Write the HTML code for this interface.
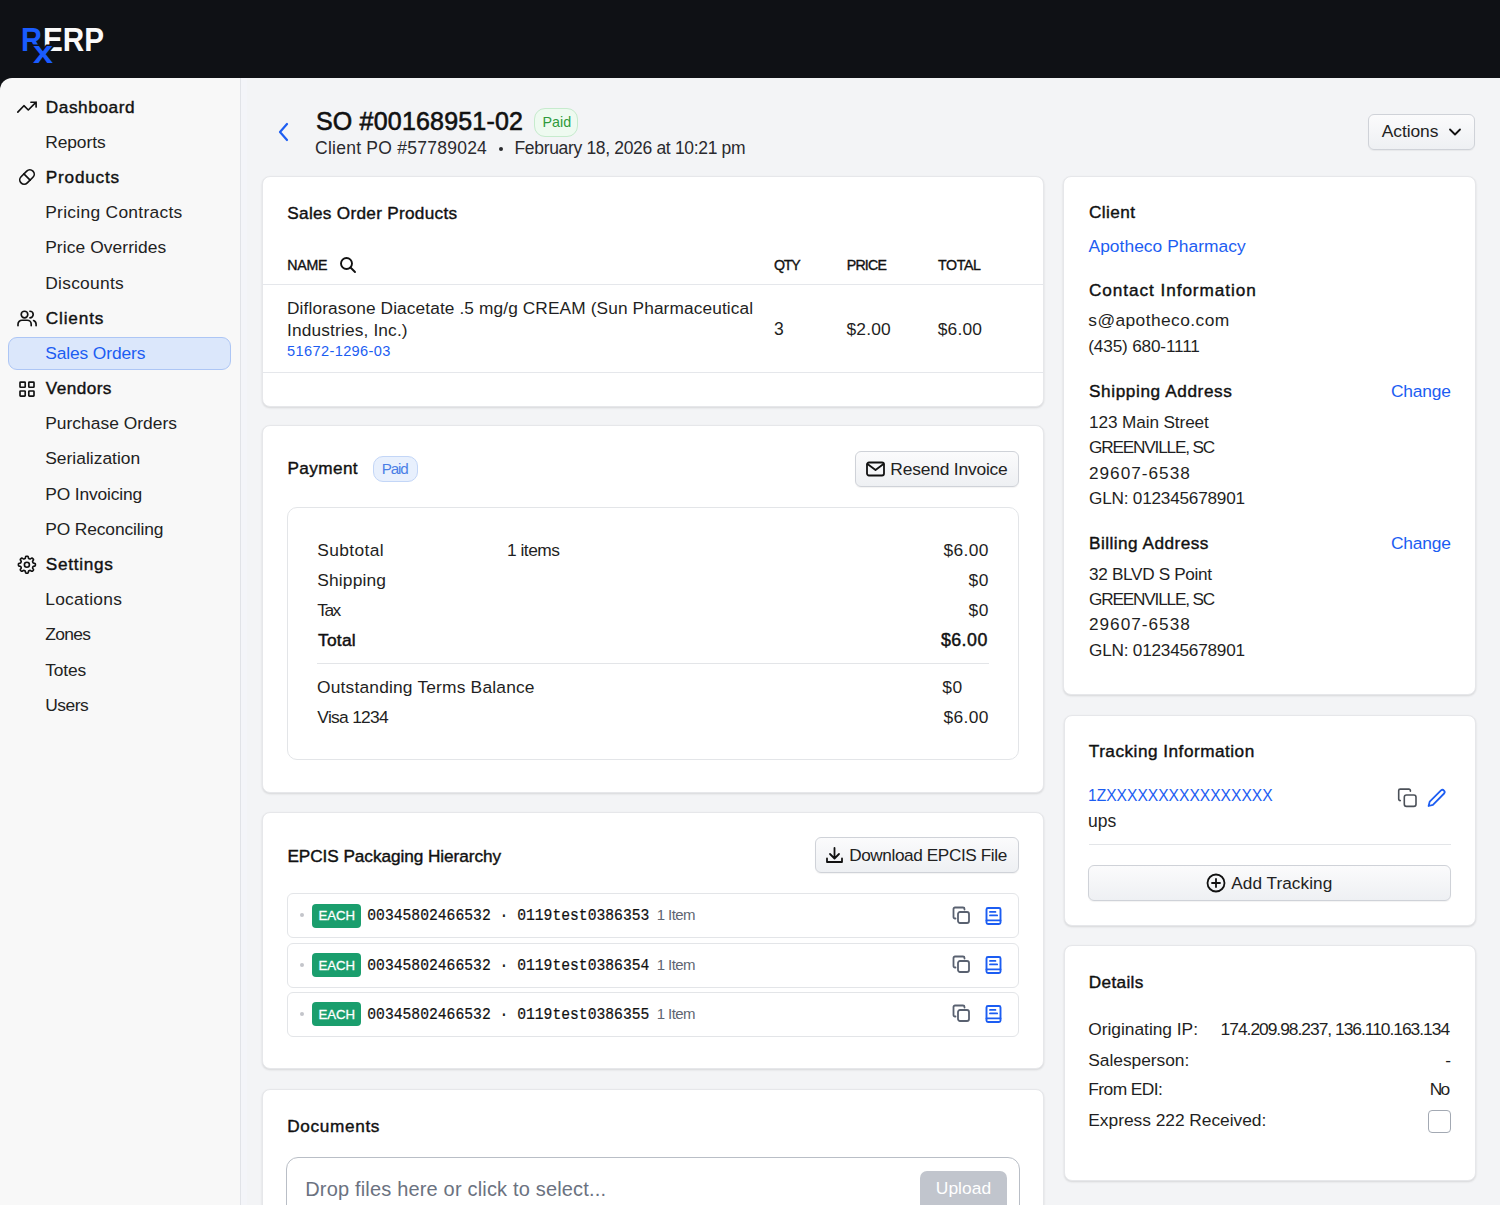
<!DOCTYPE html>
<html><head><meta charset="utf-8">
<style>
*{box-sizing:border-box;margin:0;padding:0}
html,body{width:1500px;height:1205px;overflow:hidden}
body{font-family:"Liberation Sans",sans-serif;background:#0f1115;position:relative;color:#1f1f23}
.a{position:absolute;white-space:nowrap;line-height:0}
#hdr{position:absolute;left:0;top:0;width:1500px;height:78px;background:#0f1115}
#side{position:absolute;left:0;top:78px;width:241px;height:1127px;background:#f8f8f8;border-top-left-radius:12px;border-right:1px solid #e1e3e8}
#main{position:absolute;left:241px;top:78px;width:1259px;height:1127px;background:#f3f4f6}
.card{position:absolute;background:#fff;border:1px solid #e6e7ea;border-radius:8px;box-shadow:0 1px 2px rgba(0,0,0,.09),0 1px 3px rgba(0,0,0,.04)}
.btn{position:absolute;border:1px solid #cfd2d8;border-radius:6px;background:linear-gradient(#fbfbfc,#eef0f3);box-shadow:0 1px 1px rgba(0,0,0,.05)}
svg.s{position:absolute}
</style></head><body>
<div id="hdr"></div>
<div id="side"></div>
<div id="main"></div>

<svg class="s" style="left:0;top:0" width="130" height="78" viewBox="0 0 130 78">
 <text x="21" y="50.7" font-family="Liberation Sans" font-weight="bold" font-size="33" fill="#1a5cff" textLength="21" lengthAdjust="spacingAndGlyphs">R</text>
 <text x="43" y="50.7" font-family="Liberation Sans" font-weight="bold" font-size="33" fill="#fafafa" textLength="61" lengthAdjust="spacingAndGlyphs">ERP</text>
 <text x="33" y="62.7" font-family="Liberation Sans" font-weight="bold" font-size="32" fill="#1a5cff" stroke="#0f1115" stroke-width="3" paint-order="stroke" textLength="20" lengthAdjust="spacingAndGlyphs">x</text>
</svg>
<svg class="s" style="left:16px;top:97px" width="22" height="20" viewBox="0 0 22 20" fill="none" stroke="#111" stroke-width="1.65" stroke-linecap="round" stroke-linejoin="round"><path d="M1.8 15.1l6.1-6.4 4.4 4.3 7.8-7.8M14.9 5.2h5.2v4.9"/></svg>
<svg class="s" style="left:16px;top:166.4px" width="22" height="22" viewBox="0 0 22 22" fill="none" stroke="#111" stroke-width="1.65" stroke-linecap="round" stroke-linejoin="round"><g transform="rotate(-45 11 11)"><rect x="2.6" y="6.6" width="16.8" height="8.8" rx="4.4"/><path d="M11 6.6v8.8"/></g></svg>
<svg class="s" style="left:16px;top:308px" width="22" height="20" viewBox="0 0 22 20" fill="none" stroke="#111" stroke-width="1.65" stroke-linecap="round" stroke-linejoin="round"><circle cx="8.5" cy="6.5" r="3.3"/><path d="M2 17.7v-1.5a4 4 0 014-4h5.2a4 4 0 014 4v1.5M13.9 3.2a3.3 3.3 0 010 6.6M17.6 12.6a4 4 0 012.5 3.7v1.4"/></svg>
<svg class="s" style="left:16px;top:379px" width="22" height="20" viewBox="0 0 22 20" fill="none" stroke="#111" stroke-width="1.65" stroke-linecap="round" stroke-linejoin="round"><rect x="4" y="3.15" width="5.2" height="5.1" rx=".6"/><rect x="12.8" y="3.15" width="5.2" height="5.1" rx=".6"/><rect x="4" y="12" width="5.2" height="5.1" rx=".6"/><rect x="12.8" y="12" width="5.2" height="5.1" rx=".6"/></svg>
<svg class="s" style="left:16px;top:554px" width="22" height="22" viewBox="0 0 22 22" fill="none" stroke="#111" stroke-width="1.65" stroke-linecap="round" stroke-linejoin="round"><path d="M19.40 10.70L19.39 10.92L19.38 11.14L19.34 11.36L19.27 11.58L19.14 11.78L18.89 11.96L18.46 12.10L17.95 12.20L17.53 12.29L17.26 12.41L17.11 12.54L17.02 12.69L16.94 12.84L16.88 12.99L16.81 13.15L16.75 13.30L16.69 13.46L16.63 13.62L16.60 13.79L16.61 13.99L16.71 14.26L16.94 14.63L17.24 15.06L17.44 15.45L17.49 15.76L17.44 16.00L17.34 16.20L17.21 16.38L17.06 16.55L16.91 16.71L16.75 16.86L16.58 17.01L16.40 17.14L16.20 17.24L15.96 17.29L15.65 17.24L15.26 17.04L14.83 16.74L14.46 16.51L14.19 16.41L13.99 16.40L13.82 16.43L13.66 16.49L13.50 16.55L13.35 16.61L13.19 16.68L13.04 16.74L12.89 16.82L12.74 16.91L12.61 17.06L12.49 17.33L12.40 17.75L12.30 18.26L12.16 18.69L11.98 18.94L11.78 19.07L11.56 19.14L11.34 19.18L11.12 19.19L10.90 19.20L10.68 19.19L10.46 19.18L10.24 19.14L10.02 19.07L9.82 18.94L9.64 18.69L9.50 18.26L9.40 17.75L9.31 17.33L9.19 17.06L9.06 16.91L8.91 16.82L8.76 16.74L8.61 16.68L8.45 16.61L8.30 16.55L8.14 16.49L7.98 16.43L7.81 16.40L7.61 16.41L7.34 16.51L6.97 16.74L6.54 17.04L6.15 17.24L5.84 17.29L5.60 17.24L5.40 17.14L5.22 17.01L5.05 16.86L4.89 16.71L4.74 16.55L4.59 16.38L4.46 16.20L4.36 16.00L4.31 15.76L4.36 15.45L4.56 15.06L4.86 14.63L5.09 14.26L5.19 13.99L5.20 13.79L5.17 13.62L5.11 13.46L5.05 13.30L4.99 13.15L4.92 12.99L4.86 12.84L4.78 12.69L4.69 12.54L4.54 12.41L4.27 12.29L3.85 12.20L3.34 12.10L2.91 11.96L2.66 11.78L2.53 11.58L2.46 11.36L2.42 11.14L2.41 10.92L2.40 10.70L2.41 10.48L2.42 10.26L2.46 10.04L2.53 9.82L2.66 9.62L2.91 9.44L3.34 9.30L3.85 9.20L4.27 9.11L4.54 8.99L4.69 8.86L4.78 8.71L4.86 8.56L4.92 8.41L4.99 8.25L5.05 8.10L5.11 7.94L5.17 7.78L5.20 7.61L5.19 7.41L5.09 7.14L4.86 6.77L4.56 6.34L4.36 5.95L4.31 5.64L4.36 5.40L4.46 5.20L4.59 5.02L4.74 4.85L4.89 4.69L5.05 4.54L5.22 4.39L5.40 4.26L5.60 4.16L5.84 4.11L6.15 4.16L6.54 4.36L6.97 4.66L7.34 4.89L7.61 4.99L7.81 5.00L7.98 4.97L8.14 4.91L8.30 4.85L8.45 4.79L8.61 4.72L8.76 4.66L8.91 4.58L9.06 4.49L9.19 4.34L9.31 4.07L9.40 3.65L9.50 3.14L9.64 2.71L9.82 2.46L10.02 2.33L10.24 2.26L10.46 2.22L10.68 2.21L10.90 2.20L11.12 2.21L11.34 2.22L11.56 2.26L11.78 2.33L11.98 2.46L12.16 2.71L12.30 3.14L12.40 3.65L12.49 4.07L12.61 4.34L12.74 4.49L12.89 4.58L13.04 4.66L13.19 4.72L13.35 4.79L13.50 4.85L13.66 4.91L13.82 4.97L13.99 5.00L14.19 4.99L14.46 4.89L14.83 4.66L15.26 4.36L15.65 4.16L15.96 4.11L16.20 4.16L16.40 4.26L16.58 4.39L16.75 4.54L16.91 4.69L17.06 4.85L17.21 5.02L17.34 5.20L17.44 5.40L17.49 5.64L17.44 5.95L17.24 6.34L16.94 6.77L16.71 7.14L16.61 7.41L16.60 7.61L16.63 7.78L16.69 7.94L16.75 8.10L16.81 8.25L16.88 8.41L16.94 8.56L17.02 8.71L17.11 8.86L17.26 8.99L17.53 9.11L17.95 9.20L18.46 9.30L18.89 9.44L19.14 9.62L19.27 9.82L19.34 10.04L19.38 10.26L19.39 10.48Z"/><circle cx="10.9" cy="10.7" r="2.5"/></svg>
<div style="position:absolute;left:241px;top:78px;width:6px;height:1127px;background:#f4f5f9"></div>
<div style="position:absolute;left:8px;top:337px;width:222.5px;height:32.5px;background:#dbe7fb;border:1px solid #adc6f5;border-radius:9px"></div>
<div class="a" style="left:45.7px;top:107px;font-size:17.2px;color:#111;-webkit-text-stroke:0.4px #111;letter-spacing:0.612px">Dashboard</div>
<div class="a" style="left:45.2px;top:142px;font-size:17.4px;color:#222;letter-spacing:-0.083px">Reports</div>
<div class="a" style="left:45.7px;top:177px;font-size:17.2px;color:#111;-webkit-text-stroke:0.4px #111;letter-spacing:0.814px">Products</div>
<div class="a" style="left:45.2px;top:212px;font-size:17.4px;color:#222;letter-spacing:0.294px">Pricing Contracts</div>
<div class="a" style="left:45.2px;top:247px;font-size:17.4px;color:#222;letter-spacing:0.086px">Price Overrides</div>
<div class="a" style="left:45.2px;top:283px;font-size:17.4px;color:#222;letter-spacing:0.275px">Discounts</div>
<div class="a" style="left:45.7px;top:318px;font-size:17.2px;color:#111;-webkit-text-stroke:0.4px #111;letter-spacing:0.867px">Clients</div>
<div class="a" style="left:45.2px;top:353px;font-size:17.4px;color:#1c5df2;letter-spacing:-0.118px">Sales Orders</div>
<div class="a" style="left:45.7px;top:388px;font-size:17.2px;color:#111;-webkit-text-stroke:0.4px #111;letter-spacing:0.450px">Vendors</div>
<div class="a" style="left:45.2px;top:423px;font-size:17.4px;color:#222;letter-spacing:0.029px">Purchase Orders</div>
<div class="a" style="left:45.2px;top:458px;font-size:17.4px;color:#222;letter-spacing:0.025px">Serialization</div>
<div class="a" style="left:45.2px;top:494px;font-size:17.4px;color:#222;letter-spacing:-0.136px">PO Invoicing</div>
<div class="a" style="left:45.2px;top:529px;font-size:17.4px;color:#222;letter-spacing:-0.123px">PO Reconciling</div>
<div class="a" style="left:45.7px;top:564px;font-size:17.2px;color:#111;-webkit-text-stroke:0.4px #111;letter-spacing:0.729px">Settings</div>
<div class="a" style="left:45.2px;top:599px;font-size:17.4px;color:#222;letter-spacing:0.287px">Locations</div>
<div class="a" style="left:45.2px;top:634px;font-size:17.4px;color:#222;letter-spacing:-0.650px">Zones</div>
<div class="a" style="left:45.2px;top:670px;font-size:17.4px;color:#222;letter-spacing:-0.125px">Totes</div>
<div class="a" style="left:45.2px;top:705px;font-size:17.4px;color:#222;letter-spacing:-0.450px">Users</div>
<svg class="s" style="left:277px;top:121px" width="14" height="22" viewBox="0 0 14 22" fill="none" stroke="#1c5df2" stroke-width="2.2" stroke-linecap="round" stroke-linejoin="round"><path d="M10 3l-7 8 7 8"/></svg>
<div class="a" style="left:316px;top:121px;font-size:25px;color:#111;-webkit-text-stroke:0.6px #111;letter-spacing:0.186px">SO #00168951-02</div>
<div style="position:absolute;left:533.5px;top:107.5px;width:44px;height:29px;border:1px solid #c6ebcd;background:#eefaf0;border-radius:11px"></div>
<div class="a" style="left:542.5px;top:122px;font-size:14.3px;color:#2f9a3c;">Paid</div>
<div class="a" style="left:315px;top:148px;font-size:17.5px;color:#2a2a2e;letter-spacing:.25px">Client PO #57789024</div>
<div style="position:absolute;left:498.6px;top:146.9px;width:4.4px;height:4.4px;background:#2a2a2e;border-radius:50%"></div>
<div class="a" style="left:514.5px;top:148px;font-size:17.5px;color:#2a2a2e;letter-spacing:-.33px">February 18, 2026 at 10:21 pm</div>
<div class="btn" style="left:1368px;top:114px;width:107px;height:36px"></div>
<div class="a" style="left:1381.8px;top:131px;font-size:17.4px;color:#222;letter-spacing:-0.083px">Actions</div>
<svg class="s" style="left:1448px;top:127px" width="14" height="10" viewBox="0 0 14 10" fill="none" stroke="#111" stroke-width="1.8" stroke-linecap="round" stroke-linejoin="round"><path d="M2 2.5l5 5 5-5"/></svg>
<div class="card" style="left:262px;top:176px;width:782px;height:231px"></div>
<div class="a" style="left:287.3px;top:213px;font-size:17.2px;color:#111;-webkit-text-stroke:0.4px #111;letter-spacing:0.289px">Sales Order Products</div>
<div class="a" style="left:287.3px;top:265px;font-size:14.2px;color:#111;-webkit-text-stroke:0.35px #111;letter-spacing:-0.233px">NAME</div>
<svg class="s" style="left:339px;top:256px" width="18" height="18" viewBox="0 0 18 18" fill="none" stroke="#111" stroke-width="1.9" stroke-linecap="round"><circle cx="7.5" cy="7.5" r="5.5"/><path d="M11.5 11.5l4.5 4.5"/></svg>
<div class="a" style="left:773.9px;top:265px;font-size:14.2px;color:#111;-webkit-text-stroke:0.35px #111;letter-spacing:-1.200px">QTY</div>
<div class="a" style="left:846.7px;top:265px;font-size:14.2px;color:#111;-webkit-text-stroke:0.35px #111;letter-spacing:-0.775px">PRICE</div>
<div class="a" style="left:938px;top:265px;font-size:14.2px;color:#111;-webkit-text-stroke:0.35px #111;letter-spacing:-0.375px">TOTAL</div>
<div style="position:absolute;left:263px;top:283.5px;width:780px;height:1px;background:#e5e7eb"></div>
<div class="a" style="left:287px;top:308px;font-size:17.3px;color:#1f1f23;letter-spacing:0.111px">Diflorasone Diacetate .5 mg/g CREAM (Sun Pharmaceutical</div>
<div class="a" style="left:287px;top:330px;font-size:17.3px;color:#1f1f23;letter-spacing:0.156px">Industries, Inc.)</div>
<div class="a" style="left:287px;top:351px;font-size:14.6px;color:#1c5df2;letter-spacing:0.367px">51672-1296-03</div>
<div class="a" style="left:774px;top:329px;font-size:17.5px;">3</div>
<div class="a" style="left:846.5px;top:329px;font-size:17.4px;color:#1f1f23;letter-spacing:0.150px">$2.00</div>
<div class="a" style="left:937.7px;top:329px;font-size:17.4px;color:#1f1f23;letter-spacing:0.200px">$6.00</div>
<div style="position:absolute;left:263px;top:372px;width:780px;height:1px;background:#e5e7eb"></div>
<div class="card" style="left:1063px;top:176px;width:413px;height:519px"></div>
<div class="a" style="left:1088.9px;top:212px;font-size:17.2px;color:#111;-webkit-text-stroke:0.4px #111;letter-spacing:0.420px">Client</div>
<div class="a" style="left:1088.5px;top:246px;font-size:17.4px;color:#1c5df2;letter-spacing:0.038px">Apotheco Pharmacy</div>
<div class="a" style="left:1089px;top:290px;font-size:17.2px;color:#111;-webkit-text-stroke:0.4px #111;letter-spacing:0.933px">Contact Information</div>
<div class="a" style="left:1088.3px;top:320px;font-size:17.4px;color:#1f1f23;letter-spacing:0.408px">s@apotheco.com</div>
<div class="a" style="left:1088.3px;top:346px;font-size:17.2px;color:#1f1f23;letter-spacing:-0.169px">(435) 680-1111</div>
<div class="a" style="left:1089px;top:391px;font-size:17.2px;color:#111;-webkit-text-stroke:0.4px #111;letter-spacing:0.607px">Shipping Address</div>
<div class="a" style="right:49.42px;top:391px;font-size:17.4px;color:#1c5df2;letter-spacing:-0.220px">Change</div>
<div class="a" style="left:1089px;top:422px;font-size:17.2px;color:#1f1f23;letter-spacing:-0.107px">123 Main Street</div>
<div class="a" style="left:1089px;top:447px;font-size:17.2px;color:#1f1f23;letter-spacing:-1.169px">GREENVILLE, SC</div>
<div class="a" style="left:1089px;top:473px;font-size:17.2px;color:#1f1f23;letter-spacing:1.000px">29607-6538</div>
<div class="a" style="left:1089px;top:498px;font-size:17.2px;color:#1f1f23;letter-spacing:-0.219px">GLN: 012345678901</div>
<div class="a" style="left:1089px;top:543px;font-size:17.2px;color:#111;-webkit-text-stroke:0.4px #111;letter-spacing:0.471px">Billing Address</div>
<div class="a" style="right:49.42px;top:543px;font-size:17.4px;color:#1c5df2;letter-spacing:-0.220px">Change</div>
<div class="a" style="left:1089px;top:574px;font-size:17.2px;color:#1f1f23;letter-spacing:-0.329px">32 BLVD S Point</div>
<div class="a" style="left:1089px;top:599px;font-size:17.2px;color:#1f1f23;letter-spacing:-1.169px">GREENVILLE, SC</div>
<div class="a" style="left:1089px;top:624px;font-size:17.2px;color:#1f1f23;letter-spacing:1.000px">29607-6538</div>
<div class="a" style="left:1089px;top:650px;font-size:17.2px;color:#1f1f23;letter-spacing:-0.219px">GLN: 012345678901</div>
<div class="card" style="left:262px;top:425.2px;width:782px;height:367.4px"></div>
<div class="a" style="left:287.5px;top:468px;font-size:17.2px;color:#111;-webkit-text-stroke:0.4px #111;letter-spacing:0.383px">Payment</div>
<div style="position:absolute;left:372.5px;top:455.5px;width:45px;height:26.5px;background:#e8f0fd;border:1px solid #c3d6f7;border-radius:10px"></div>
<div class="a" style="left:381.7px;top:469px;font-size:15.2px;color:#4a7fe6;letter-spacing:-1.133px">Paid</div>
<div class="btn" style="left:855px;top:451px;width:164px;height:36px"></div>
<svg class="s" style="left:865px;top:460px" width="21" height="18" viewBox="0 0 21 18" fill="none" stroke="#111" stroke-width="1.8" stroke-linejoin="round" stroke-linecap="round"><rect x="2" y="2.5" width="17" height="13" rx="2"/><path d="M2.5 4l8 6 8-6"/></svg>
<div class="a" style="left:890.3px;top:469px;font-size:17.4px;color:#222;letter-spacing:-0.185px">Resend Invoice</div>
<div style="position:absolute;left:287px;top:507px;width:732px;height:253px;border:1px solid #e3e5e8;border-radius:10px"></div>
<div class="a" style="left:317.3px;top:550px;font-size:17.4px;color:#1f1f23;letter-spacing:0.371px">Subtotal</div>
<div class="a" style="left:507px;top:550px;font-size:17.4px;color:#1f1f23;letter-spacing:-0.500px">1 items</div>
<div class="a" style="right:511.25px;top:550px;font-size:17.4px;color:#1f1f23;letter-spacing:0.350px">$6.00</div>
<div class="a" style="left:317.3px;top:580px;font-size:17.4px;color:#1f1f23;letter-spacing:0.143px">Shipping</div>
<div class="a" style="right:511.10px;top:580px;font-size:17.4px;color:#1f1f23;letter-spacing:0.500px">$0</div>
<div class="a" style="left:317.3px;top:610px;font-size:17.4px;color:#1f1f23;letter-spacing:-1.600px">Tax</div>
<div class="a" style="right:511.10px;top:610px;font-size:17.4px;color:#1f1f23;letter-spacing:0.500px">$0</div>
<div class="a" style="left:318px;top:640px;font-size:17.4px;color:#111;-webkit-text-stroke:0.45px #111;letter-spacing:0.250px">Total</div>
<div class="a" style="left:940.9px;top:640px;font-size:17.8px;color:#111;-webkit-text-stroke:0.45px #111;letter-spacing:0.475px">$6.00</div>
<div style="position:absolute;left:317px;top:663px;width:672px;height:1px;background:#e3e5e8"></div>
<div class="a" style="left:317px;top:687px;font-size:17.4px;color:#1f1f23;letter-spacing:0.175px">Outstanding Terms Balance</div>
<div class="a" style="left:942.3px;top:687px;font-size:17.4px;color:#1f1f23;letter-spacing:0.500px">$0</div>
<div class="a" style="left:317.3px;top:717px;font-size:17.4px;color:#1f1f23;letter-spacing:-0.700px">Visa 1234</div>
<div class="a" style="right:511.25px;top:717px;font-size:17.4px;color:#1f1f23;letter-spacing:0.350px">$6.00</div>
<div class="card" style="left:262px;top:811.8px;width:782px;height:257.2px"></div>
<div class="a" style="left:287.4px;top:856px;font-size:17.2px;color:#111;-webkit-text-stroke:0.4px #111;letter-spacing:-0.050px">EPCIS Packaging Hierarchy</div>
<div class="btn" style="left:814.5px;top:837px;width:204px;height:36px"></div>
<svg class="s" style="left:824px;top:845px" width="21" height="20" viewBox="0 0 21 20" fill="none" stroke="#111" stroke-width="1.8" stroke-linecap="round" stroke-linejoin="round"><path d="M10.5 3v10M6 9l4.5 4.5L15 9M3 13.5V17h15v-3.5"/></svg>
<div class="a" style="left:849.2px;top:855px;font-size:17.2px;color:#222;letter-spacing:-0.400px">Download EPCIS File</div>
<div style="position:absolute;left:287px;top:893.3px;width:732px;height:45px;border:1px solid #e3e5e8;border-radius:6px"></div>
<div style="position:absolute;left:300.1px;top:913.4px;width:4px;height:4px;background:#c3c5ca;border-radius:50%"></div>
<div style="position:absolute;left:312px;top:904.0px;width:49px;height:23.7px;background:#1a9e6d;border-radius:4px"></div>
<div class="a" style="left:318.5px;top:916px;font-size:13.2px;color:#fff;-webkit-text-stroke:.3px #fff">EACH</div>
<div class="a" style="left:367.3px;top:916px;font-size:14.7px;color:#111;font-family:'Liberation Mono',monospace;transform:scaleY(1.07);transform-origin:0 4px;-webkit-text-stroke:.2px #111">00345802466532 &middot; 0119test0386353</div>
<div class="a" style="left:656.7px;top:915px;font-size:15px;color:#5f6672;letter-spacing:-0.560px">1 Item</div>
<svg class="s" style="left:951px;top:904.6px" width="21" height="21" viewBox="0 0 21 21" fill="none" stroke="#596170" stroke-width="1.8" stroke-linejoin="round" stroke-linecap="round"><rect x="7" y="7" width="11" height="11" rx="2"/><path d="M4.5 13.5h-.5a1.5 1.5 0 01-1.5-1.5V4a1.5 1.5 0 011.5-1.5h8A1.5 1.5 0 0113.5 4v.5"/></svg>
<svg class="s" style="left:984px;top:905.6px" width="19" height="20" viewBox="0 0 19 20" fill="none" stroke="#1c5df2" stroke-width="1.9" stroke-linejoin="round" stroke-linecap="round"><rect x="2.5" y="2" width="14" height="16" rx="1.5"/><path d="M6 5.9h5.4M6 9.4h7.1M2.5 14.4h14"/></svg>
<div style="position:absolute;left:287px;top:942.5px;width:732px;height:45px;border:1px solid #e3e5e8;border-radius:6px"></div>
<div style="position:absolute;left:300.1px;top:962.6px;width:4px;height:4px;background:#c3c5ca;border-radius:50%"></div>
<div style="position:absolute;left:312px;top:953.2px;width:49px;height:23.7px;background:#1a9e6d;border-radius:4px"></div>
<div class="a" style="left:318.5px;top:966px;font-size:13.2px;color:#fff;-webkit-text-stroke:.3px #fff">EACH</div>
<div class="a" style="left:367.3px;top:966px;font-size:14.7px;color:#111;font-family:'Liberation Mono',monospace;transform:scaleY(1.07);transform-origin:0 4px;-webkit-text-stroke:.2px #111">00345802466532 &middot; 0119test0386354</div>
<div class="a" style="left:656.7px;top:965px;font-size:15px;color:#5f6672;letter-spacing:-0.560px">1 Item</div>
<svg class="s" style="left:951px;top:953.8px" width="21" height="21" viewBox="0 0 21 21" fill="none" stroke="#596170" stroke-width="1.8" stroke-linejoin="round" stroke-linecap="round"><rect x="7" y="7" width="11" height="11" rx="2"/><path d="M4.5 13.5h-.5a1.5 1.5 0 01-1.5-1.5V4a1.5 1.5 0 011.5-1.5h8A1.5 1.5 0 0113.5 4v.5"/></svg>
<svg class="s" style="left:984px;top:954.8px" width="19" height="20" viewBox="0 0 19 20" fill="none" stroke="#1c5df2" stroke-width="1.9" stroke-linejoin="round" stroke-linecap="round"><rect x="2.5" y="2" width="14" height="16" rx="1.5"/><path d="M6 5.9h5.4M6 9.4h7.1M2.5 14.4h14"/></svg>
<div style="position:absolute;left:287px;top:991.6999999999999px;width:732px;height:45px;border:1px solid #e3e5e8;border-radius:6px"></div>
<div style="position:absolute;left:300.1px;top:1011.8px;width:4px;height:4px;background:#c3c5ca;border-radius:50%"></div>
<div style="position:absolute;left:312px;top:1002.4px;width:49px;height:23.7px;background:#1a9e6d;border-radius:4px"></div>
<div class="a" style="left:318.5px;top:1015px;font-size:13.2px;color:#fff;-webkit-text-stroke:.3px #fff">EACH</div>
<div class="a" style="left:367.3px;top:1015px;font-size:14.7px;color:#111;font-family:'Liberation Mono',monospace;transform:scaleY(1.07);transform-origin:0 4px;-webkit-text-stroke:.2px #111">00345802466532 &middot; 0119test0386355</div>
<div class="a" style="left:656.7px;top:1014px;font-size:15px;color:#5f6672;letter-spacing:-0.560px">1 Item</div>
<svg class="s" style="left:951px;top:1003.0px" width="21" height="21" viewBox="0 0 21 21" fill="none" stroke="#596170" stroke-width="1.8" stroke-linejoin="round" stroke-linecap="round"><rect x="7" y="7" width="11" height="11" rx="2"/><path d="M4.5 13.5h-.5a1.5 1.5 0 01-1.5-1.5V4a1.5 1.5 0 011.5-1.5h8A1.5 1.5 0 0113.5 4v.5"/></svg>
<svg class="s" style="left:984px;top:1004.0px" width="19" height="20" viewBox="0 0 19 20" fill="none" stroke="#1c5df2" stroke-width="1.9" stroke-linejoin="round" stroke-linecap="round"><rect x="2.5" y="2" width="14" height="16" rx="1.5"/><path d="M6 5.9h5.4M6 9.4h7.1M2.5 14.4h14"/></svg>
<div class="card" style="left:262px;top:1089.3px;width:782px;height:140px"></div>
<div class="a" style="left:287.3px;top:1126px;font-size:17.2px;color:#111;-webkit-text-stroke:0.4px #111;letter-spacing:0.650px">Documents</div>
<div style="position:absolute;left:286px;top:1156.5px;width:734px;height:80px;border:1px solid #b9bec6;border-radius:12px"></div>
<div class="a" style="left:305.2px;top:1189px;font-size:20px;color:#6b7280;letter-spacing:0.175px">Drop files here or click to select...</div>
<div style="position:absolute;left:919.5px;top:1171px;width:87.5px;height:50px;background:#c1c5cd;border-radius:7px"></div>
<div class="a" style="left:935.8px;top:1188px;font-size:17.4px;color:#fff;letter-spacing:0.040px">Upload</div>
<div class="card" style="left:1063.5px;top:714.7px;width:412.5px;height:211.5px"></div>
<div class="a" style="left:1088.8px;top:751px;font-size:17.2px;color:#111;-webkit-text-stroke:0.4px #111;letter-spacing:0.495px">Tracking Information</div>
<div class="a" style="left:1088px;top:796px;font-size:15.6px;color:#1c5df2;transform:scaleY(1.1);transform-origin:0 5px">1ZXXXXXXXXXXXXXXXX</div>
<div class="a" style="left:1088px;top:821px;font-size:17.5px;">ups</div>
<svg class="s" style="left:1396px;top:787px" width="22" height="22" viewBox="0 0 22 22" fill="none" stroke="#4b5058" stroke-width="1.6" stroke-linejoin="round" stroke-linecap="round"><rect x="8.3" y="8" width="11.7" height="11.4" rx="2.2"/><path d="M4.3 13.6h-.1a1.5 1.5 0 01-1.5-1.5V3.6a1.5 1.5 0 011.5-1.5h8.7a1.5 1.5 0 011.5 1.5v.6"/></svg>
<svg class="s" style="left:1425px;top:787px" width="23" height="23" viewBox="0 0 23 23" fill="none" stroke="#1c5df2" stroke-width="1.8" stroke-linejoin="round" stroke-linecap="round"><path d="M3.6 19l1.1-4.4L16 3.4a2.2 2.2 0 013.1 3.1L7.9 17.8z"/></svg>
<div style="position:absolute;left:1088.5px;top:844px;width:362.5px;height:1px;background:#e3e5e8"></div>
<div class="btn" style="left:1088px;top:865px;width:363px;height:36px"></div>
<svg class="s" style="left:1205px;top:872px" width="22" height="22" viewBox="0 0 22 22" fill="none" stroke="#111" stroke-width="1.8" stroke-linecap="round"><circle cx="11" cy="11" r="8.5"/><path d="M11 7v8M7 11h8"/></svg>
<div class="a" style="left:1231.3px;top:883px;font-size:17.2px;color:#222;letter-spacing:0.055px">Add Tracking</div>
<div class="card" style="left:1063.5px;top:945.4px;width:412.5px;height:235.4px"></div>
<div class="a" style="left:1088.8px;top:982px;font-size:17.2px;color:#111;-webkit-text-stroke:0.4px #111;letter-spacing:0.333px">Details</div>
<div class="a" style="left:1088.3px;top:1029px;font-size:17.4px;color:#1f1f23;letter-spacing:-0.036px">Originating IP:</div>
<div class="a" style="right:50.91px;top:1029px;font-size:17.4px;color:#1f1f23;letter-spacing:-1.010px">174.209.98.237, 136.110.163.134</div>
<div class="a" style="left:1088.3px;top:1060px;font-size:17.4px;color:#1f1f23;letter-spacing:-0.045px">Salesperson:</div>
<div class="a" style="right:49px;top:1060px;font-size:17.4px;">-</div>
<div class="a" style="left:1088.3px;top:1089px;font-size:17.4px;color:#1f1f23;letter-spacing:-0.575px">From EDI:</div>
<div class="a" style="right:51.50px;top:1089px;font-size:17.4px;color:#1f1f23;letter-spacing:-1.800px">No</div>
<div class="a" style="left:1088.3px;top:1120px;font-size:17.4px;color:#1f1f23;letter-spacing:-0.040px">Express 222 Received:</div>
<div style="position:absolute;left:1427.5px;top:1109.5px;width:23.5px;height:23.5px;border:1.5px solid #a3a9b3;border-radius:4px;background:#fff"></div>
</body></html>
